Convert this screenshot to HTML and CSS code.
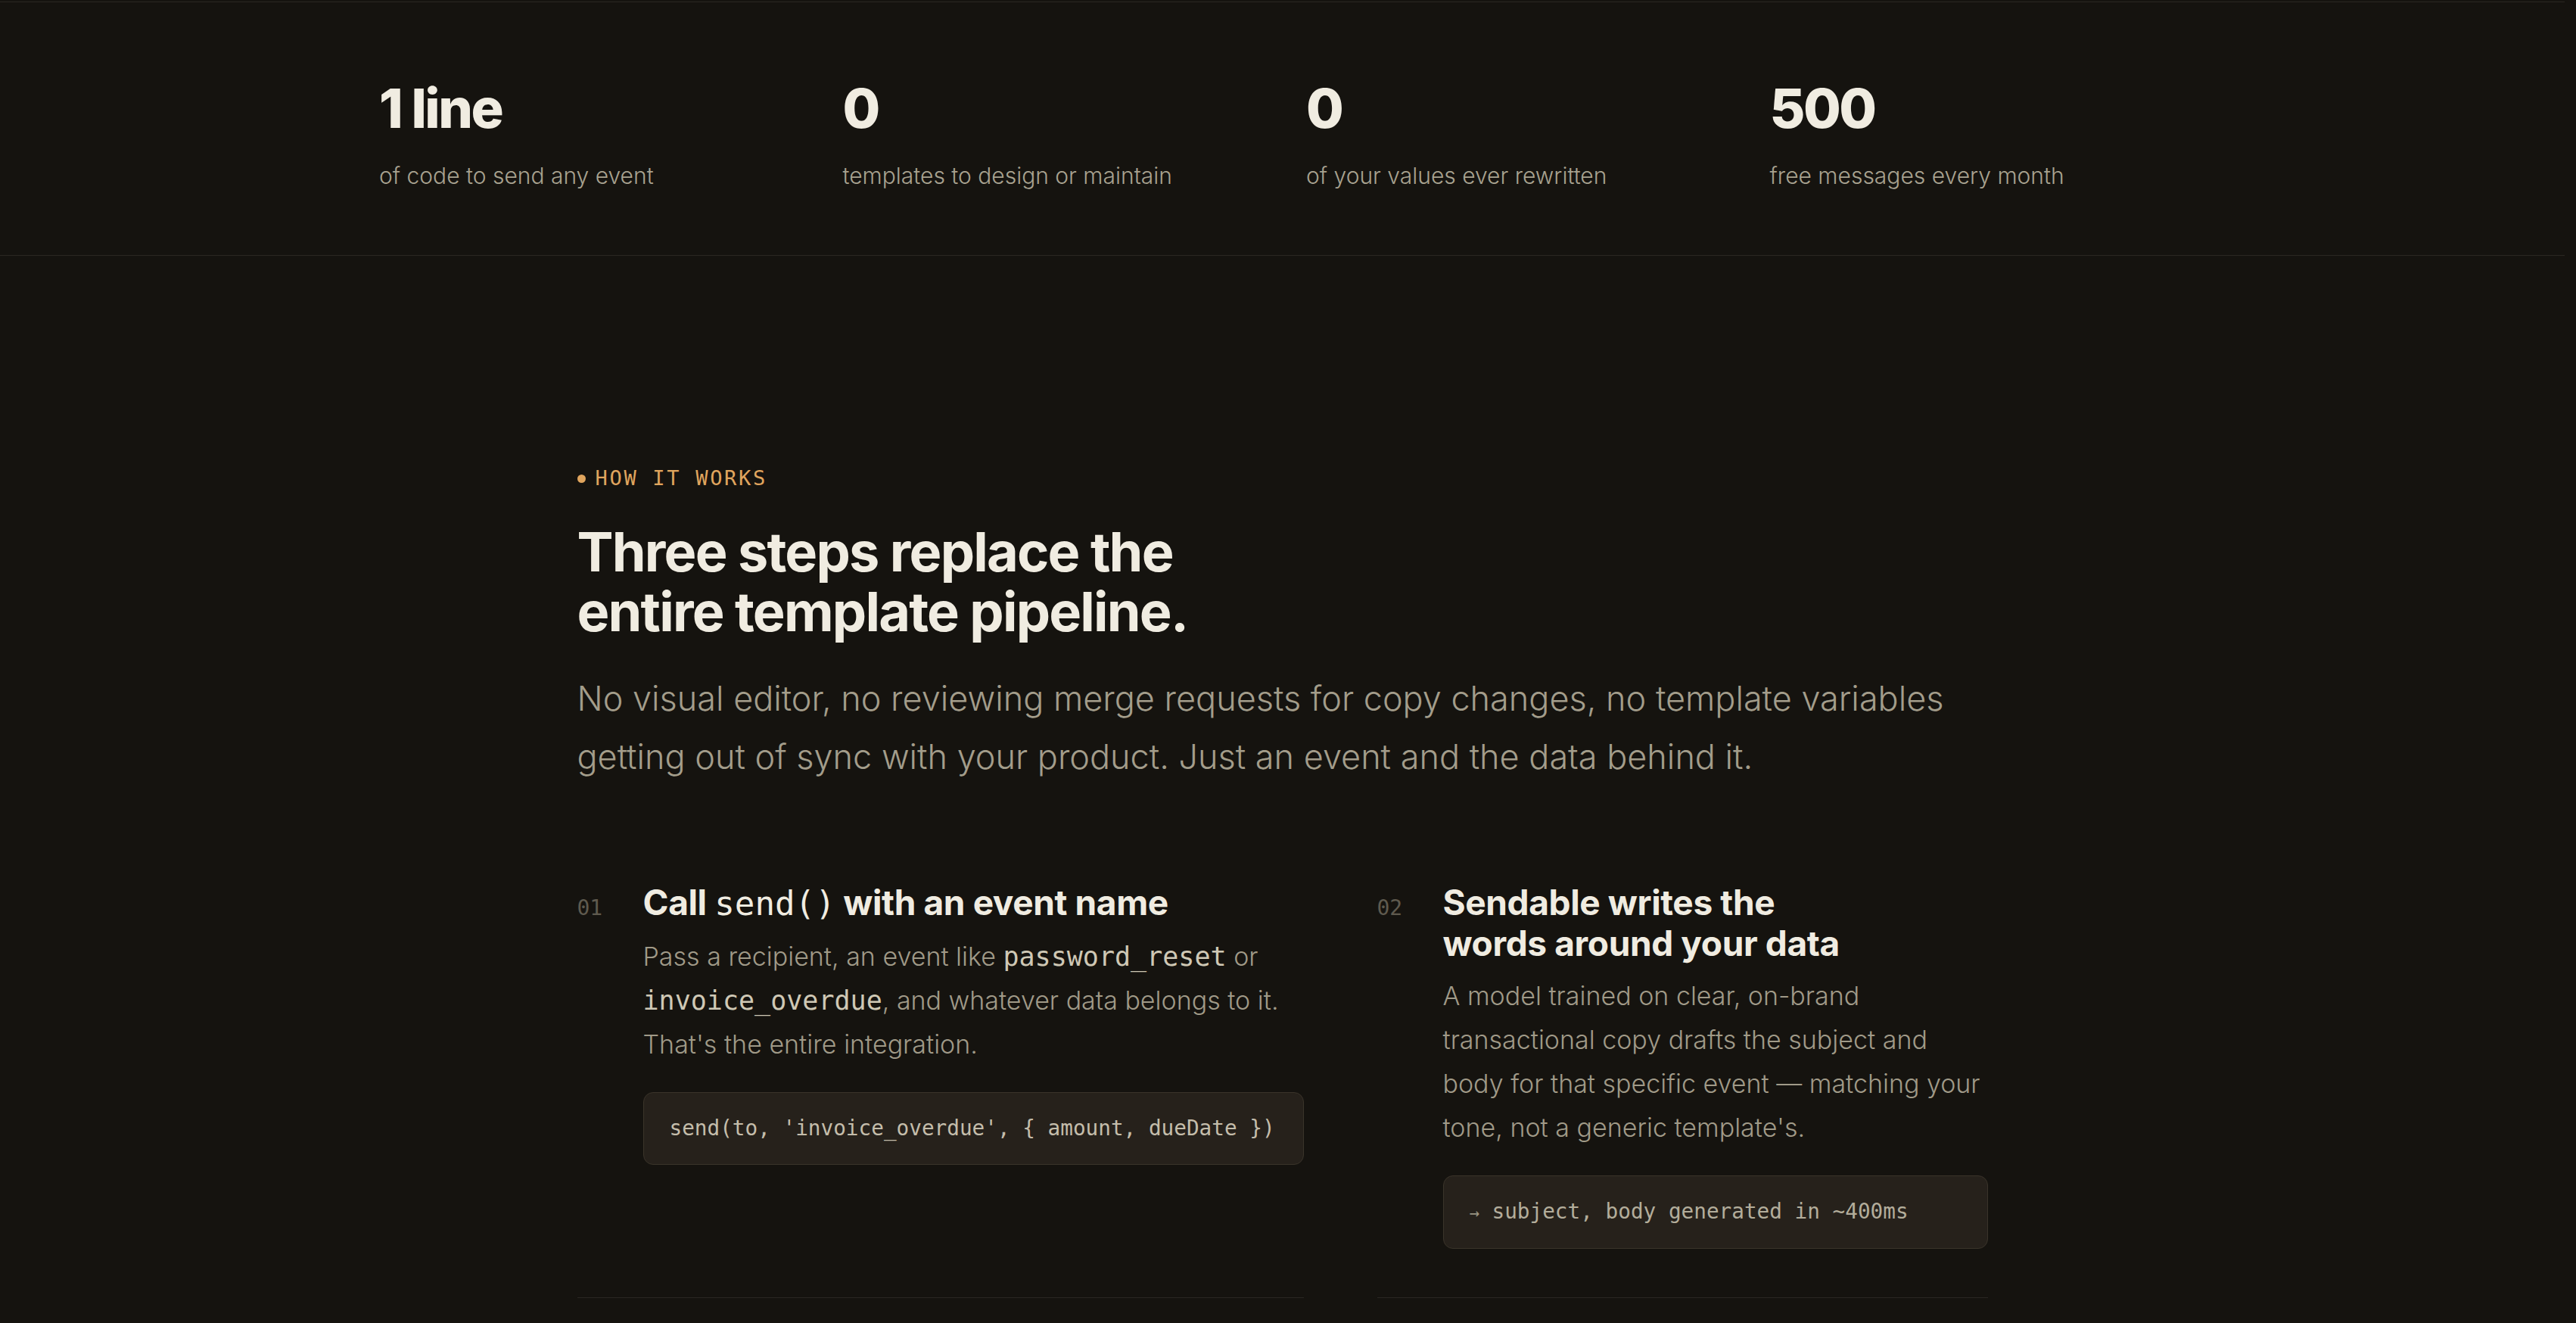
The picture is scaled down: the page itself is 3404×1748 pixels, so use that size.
FILE: index.html
```html
<!DOCTYPE html>
<html lang="en">
<head>
  <meta charset="UTF-8">
  <meta name="viewport" content="width=device-width, initial-scale=1.0">
  <title>Sendable - How it works</title>
  <link rel="stylesheet" href="styles.css">
</head>
<body>
  <section class="stats">
    <div class="stats-grid">
      <div class="stat">
        <div class="stat-value">1 line</div>
        <div class="stat-label">of code to send any event</div>
      </div>
      <div class="stat">
        <div class="stat-value">0</div>
        <div class="stat-label">templates to design or maintain</div>
      </div>
      <div class="stat">
        <div class="stat-value">0</div>
        <div class="stat-label">of your values ever rewritten</div>
      </div>
      <div class="stat">
        <div class="stat-value">500</div>
        <div class="stat-label">free messages every month</div>
      </div>
    </div>
  </section>

  <section class="how">
    <div class="container">
      <div class="eyebrow"><span class="dot"></span>HOW IT WORKS</div>
      <h2>Three steps replace the<br>entire template pipeline.</h2>
      <p class="lead">No visual editor, no reviewing merge requests for copy changes, no template variables getting out of sync with your product. Just an event and the data behind it.</p>

      <div class="steps">
        <div class="step">
          <span class="step-num">01</span>
          <div class="step-body">
            <h3>Call <code>send()</code> with an event name</h3>
            <p>Pass a recipient, an event like <code>password_reset</code> or <code>invoice_overdue</code>, and whatever data belongs to it. That's the entire integration.</p>
            <pre class="snippet">send(to, 'invoice_overdue', { amount, dueDate })</pre>
          </div>
        </div>
        <div class="step">
          <span class="step-num">02</span>
          <div class="step-body">
            <h3>Sendable writes the<br>words around your data</h3>
            <p>A model trained on clear, on-brand transactional copy drafts the subject and body for that specific event — matching your tone, not a generic template's.</p>
            <pre class="snippet muted"><span class="arrow">→</span> subject, body generated in ~400ms</pre>
          </div>
        </div>
      </div>
    </div>
  </section>
</body>
</html>
```

FILE: styles.css
```css
body {
  margin: 0;
  padding: 2px 15px 0 0;
  background-color: #15130f;
  color: #efebe0;
  font-family: Inter, "Noto Sans", sans-serif;
  font-weight: 300;
}

/* stats strip */
.stats {
  border-top: 1px solid #2a2722;
  border-bottom: 1px solid #2a2722;
  padding: 104px 0 84px;
}
.stats-grid {
  width: 2387px;
  margin: 0 auto;
  display: grid;
  grid-template-columns: repeat(4, 1fr);
  column-gap: 63px;
}
.stat-value {
  font-weight: 800;
  font-size: 72px;
  line-height: 1;
  letter-spacing: -0.035em;
  color: #f0ece1;
}
.stat-label {
  margin-top: 32px;
  font-size: 30px;
  line-height: 1.4;
  color: #a8a290;
}

/* how it works */
.how {
  padding: 278px 0 80px;
}
.container {
  width: 1864px;
  margin: 0 auto;
}
.eyebrow {
  display: flex;
  align-items: center;
  font-family: "DejaVu Sans Mono", monospace;
  font-size: 27px;
  line-height: 1.2;
  letter-spacing: 0.1em;
  color: #e0a55e;
}
.eyebrow .dot {
  width: 11px;
  height: 11px;
  border-radius: 50%;
  background: #e0a55e;
  margin-right: 13px;
}
.how h2 {
  margin: 41px 0 0;
  font-weight: 700;
  font-size: 72px;
  line-height: 79px;
  letter-spacing: -0.025em;
  color: #f0ece1;
}
.lead {
  margin: 37px 0 0;
  max-width: 1840px;
  font-size: 45px;
  line-height: 77px;
  color: #a39d8b;
}

.steps {
  margin-top: 127px;
  display: grid;
  grid-template-columns: 960px 1fr;
  column-gap: 97px;
}
.step {
  display: grid;
  grid-template-columns: 87px minmax(0, 1fr);
  align-items: baseline;
  padding-bottom: 64px;
  border-bottom: 1px solid #2a2722;
}
.step-num {
  font-family: "DejaVu Sans Mono", monospace;
  font-size: 28px;
  color: #5f5a4e;
}
.step h3 {
  margin: 0;
  font-weight: 700;
  font-size: 46px;
  line-height: 54px;
  letter-spacing: -0.008em;
  color: #f0ece1;
}
.step h3 code {
  font-family: "DejaVu Sans Mono", monospace;
  font-weight: 400;
  font-size: 0.96em;
  letter-spacing: 0;
}
.step p {
  margin: 14px 0 0;
  font-size: 34px;
  line-height: 58px;
  color: #a09a88;
}
.step p code {
  font-family: "DejaVu Sans Mono", monospace;
  font-size: 1.03em;
  line-height: 1;
  color: #cfc8b5;
}
.snippet {
  margin: 34px 0 0;
  padding: 27px 34px;
  background: #26211b;
  border: 1px solid #3a342a;
  border-radius: 13px;
  font-family: "DejaVu Sans Mono", monospace;
  font-size: 27.7px;
  line-height: 40px;
  color: #c4bdab;
  white-space: pre;
  overflow: hidden;
}
.snippet.muted {
  color: #b3ad9b;
}
.snippet .arrow {
  font-size: 0.8em;
  color: #9a9482;
}
```
